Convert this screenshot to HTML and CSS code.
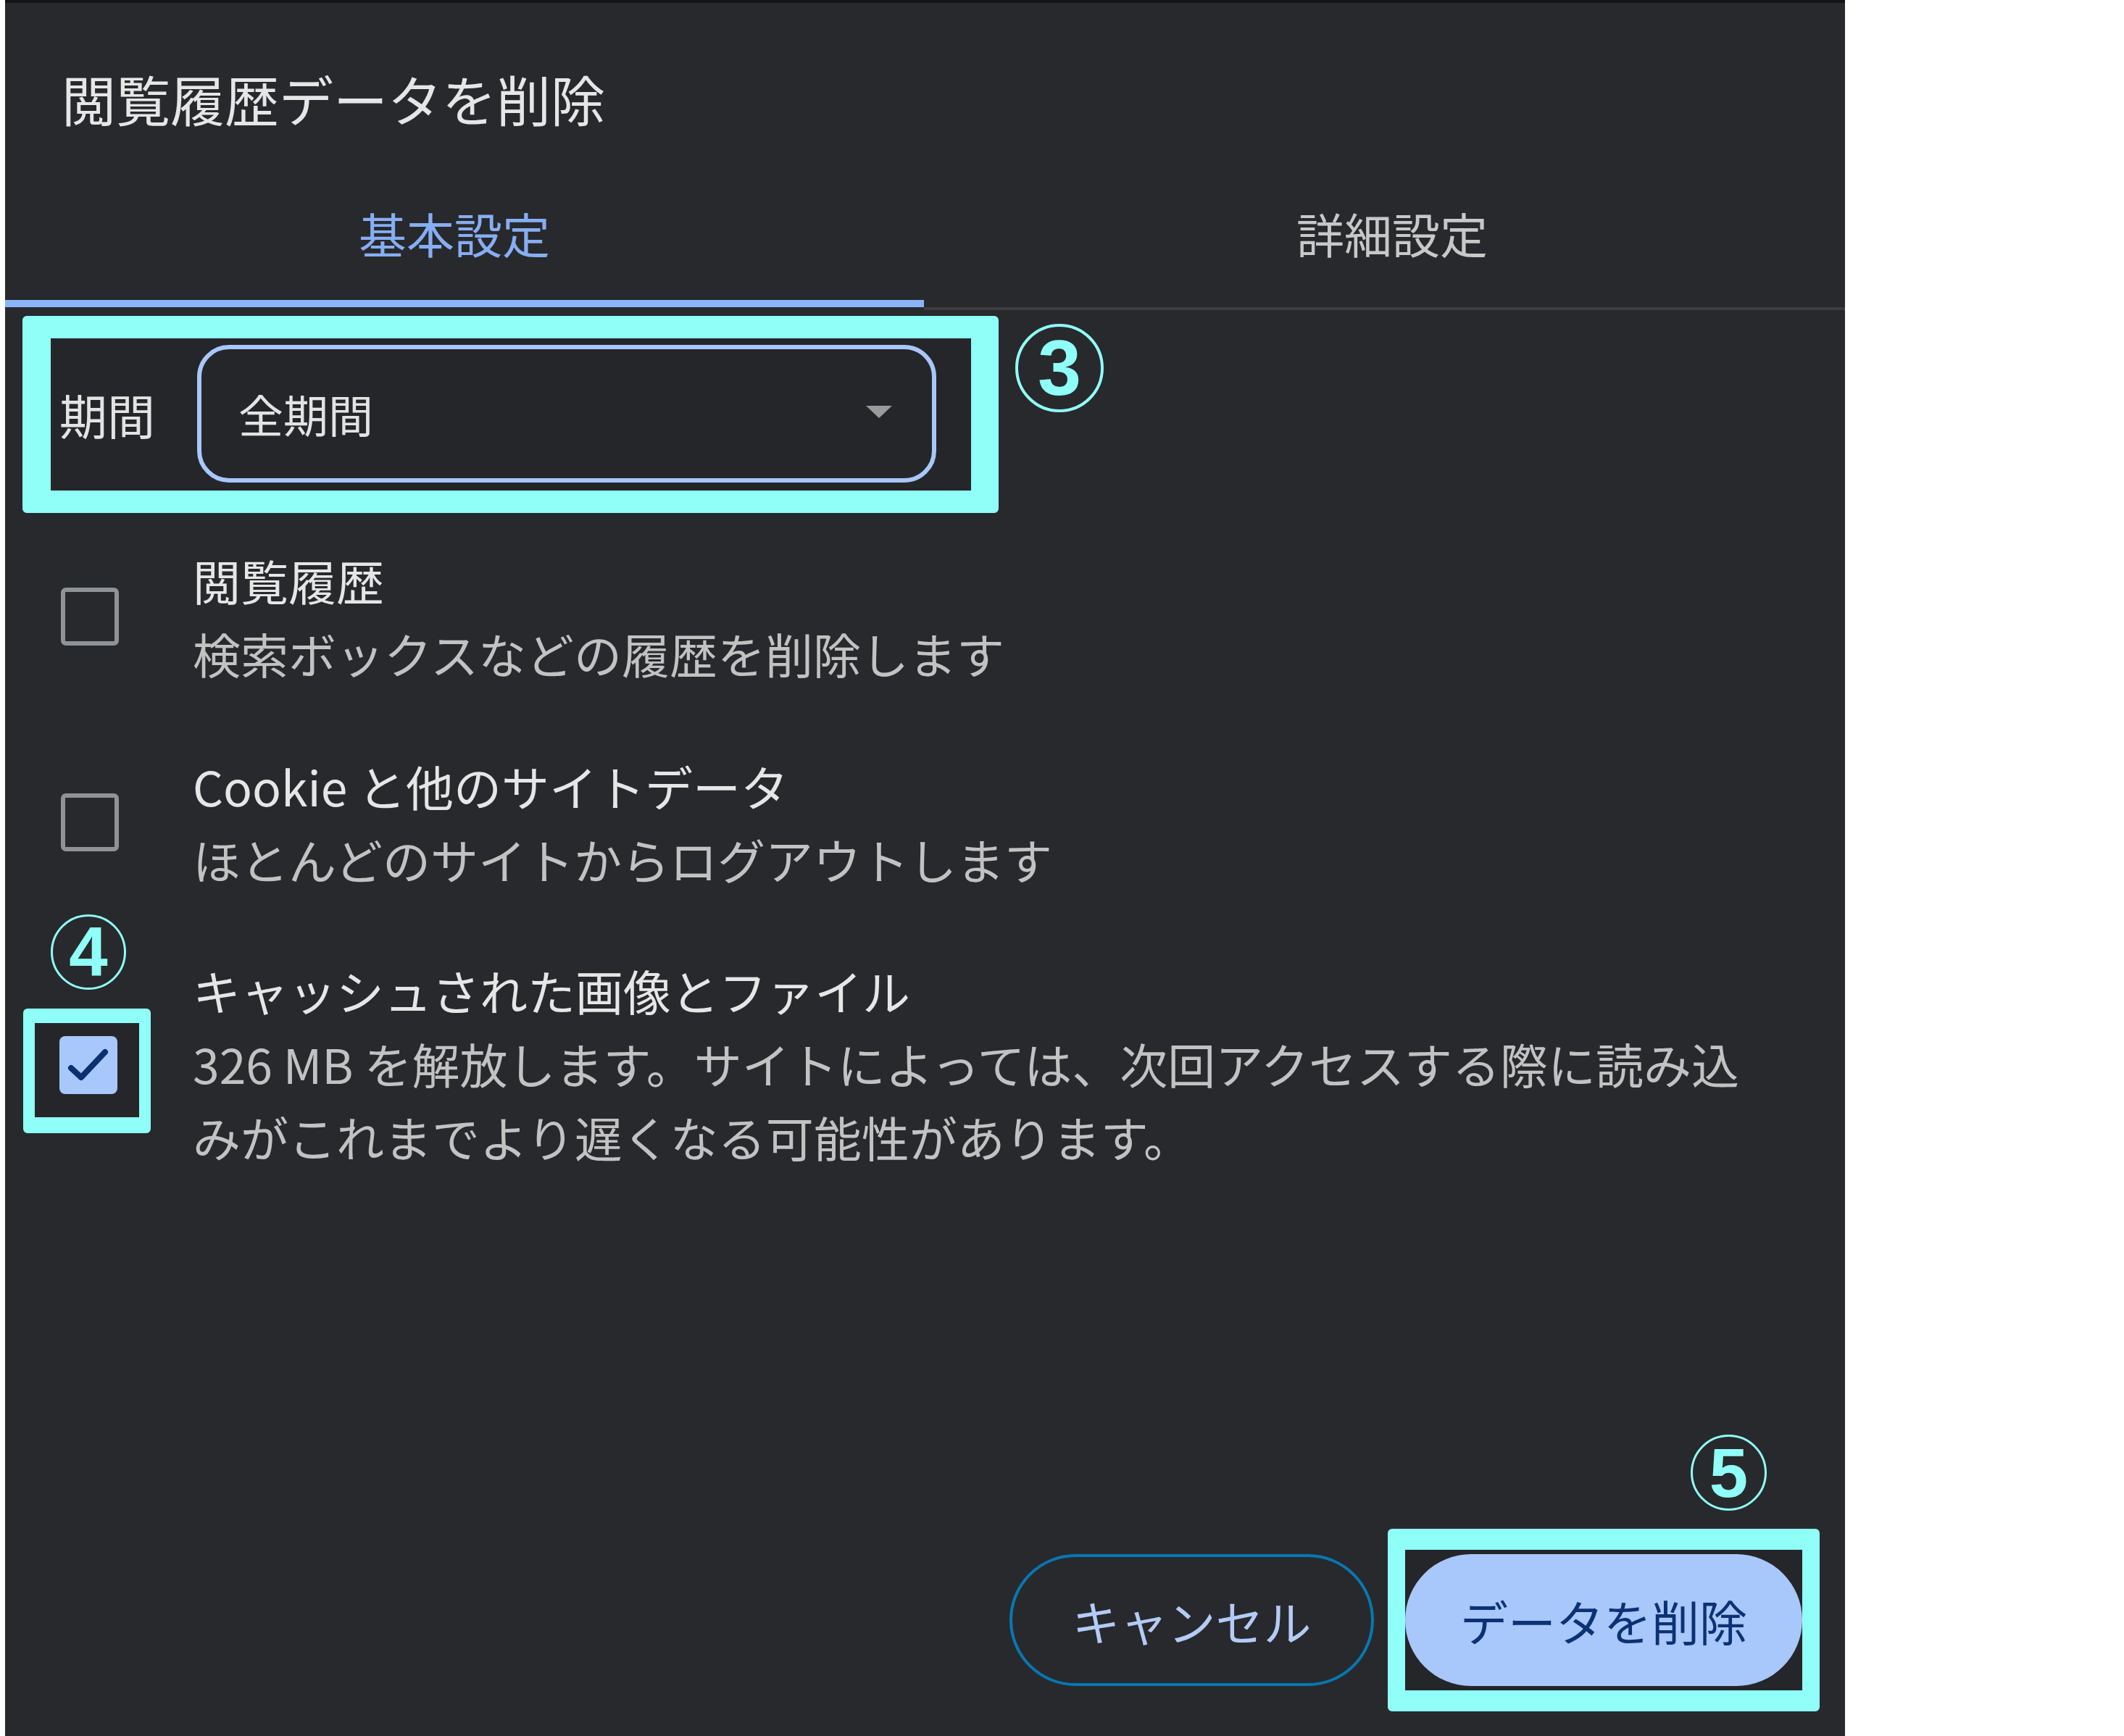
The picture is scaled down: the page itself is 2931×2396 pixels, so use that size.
FILE: index.html
```html
<!DOCTYPE html>
<html lang="ja">
<head>
<meta charset="utf-8">
<title>閲覧履歴データを削除</title>
<link rel="stylesheet" href="styles.css">
</head>
<body>
<div class="panel">
  <h1 class="title">閲覧履歴データを削除</h1>

  <div class="tabs">
    <div class="tab tab-active">基本設定</div>
    <div class="tab tab-idle">詳細設定</div>
  </div>

  <div class="period-row">
    <div class="hl hl-period">
      <div class="period">
        <span class="period-label">期間</span>
        <div class="select">
          <span class="select-value">全期間</span>
          <span class="select-arrow"></span>
        </div>
      </div>
    </div>
    <div class="badge badge-3"><span>3</span></div>
  </div>

  <div class="items">
    <div class="item">
      <span class="cb"></span>
      <div class="item-text">
        <div class="item-title">閲覧履歴</div>
        <div class="item-desc">検索ボックスなどの履歴を削除します</div>
      </div>
    </div>
    <div class="item">
      <span class="cb"></span>
      <div class="item-text">
        <div class="item-title">Cookie と他のサイトデータ</div>
        <div class="item-desc">ほとんどのサイトからログアウトします</div>
      </div>
    </div>
    <div class="item">
      <div class="hl hl-check">
        <div class="badge badge-4"><span>4</span></div>
        <span class="cb cb-on">
          <svg viewBox="0 0 80 80" width="80" height="80"><path d="M16 44 L30 57 L63 22" fill="none" stroke="#0a3070" stroke-width="8" stroke-linecap="round" stroke-linejoin="round"/></svg>
        </span>
      </div>
      <div class="item-text item-text-3">
        <div class="item-title">キャッシュされた画像とファイル</div>
        <div class="item-desc">326 MB を解放します。サイトによっては、次回アクセスする際に読み込<br>みがこれまでより遅くなる可能性があります。</div>
      </div>
    </div>
  </div>

  <div class="actions">
    <button class="btn btn-cancel" type="button">キャンセル</button>
    <div class="hl hl-delete">
      <div class="badge badge-5"><span>5</span></div>
      <button class="btn btn-delete" type="button">データを削除</button>
    </div>
  </div>
</div>
</body>
</html>
```

FILE: styles.css
```css
html, body {
  margin: 0;
  padding: 0;
  background: #ffffff;
}
body {
  font-family: "Noto Sans CJK JP", "Noto Sans", sans-serif;
  width: 2931px;
  height: 2396px;
  overflow: hidden;
}
.panel {
  margin-left: 7px;
  width: 2539px;
  height: 2396px;
  box-sizing: border-box;
  border-top: 4px solid #131416;
  background: #28292d;
  display: flex;
  flex-direction: column;
}
.title {
  margin: 0;
  padding: 87px 0 0 78px;
  font-size: 75px;
  line-height: 90px;
  font-weight: 400;
  color: #e6e6e6;
}
.tabs {
  display: grid;
  grid-template-columns: 1268px 1fr;
  align-items: start;
}
.tab {
  font-size: 66px;
  line-height: 80px;
  text-align: center;
  padding-top: 100px;
}
.tab-active {
  color: #86aef2;
  padding-right: 28px;
  padding-bottom: 53px;
  border-bottom: 10px solid #8ab4f8;
  margin-bottom: 4px;
}
.tab-idle {
  color: #c8c8c8;
  padding-left: 21px;
  padding-bottom: 63px;
  border-bottom: 4px solid #3c3d41;
}
.period-row {
  display: flex;
  align-items: flex-start;
  margin-top: 8px;
  margin-left: 24px;
}
.hl {
  border-style: solid;
  border-color: #8ffff7;
  border-radius: 6px;
  background: #25262a;
}
.hl-period {
  border-width: 31px 38px 31px 39px;
  width: 1270px;
}
.period {
  display: flex;
  align-items: center;
  padding: 9px 48px 11px 12px;
}
.period-label {
  font-size: 66px;
  line-height: 80px;
  color: #e3e3e3;
  width: 132px;
  flex: none;
}
.select {
  margin-left: 58px;
  flex: 1;
  height: 190px;
  box-sizing: border-box;
  border: 6px solid #a8c7fa;
  border-radius: 44px;
  display: flex;
  align-items: center;
  justify-content: space-between;
  padding: 0 55px 0 51px;
}
.select-value {
  font-size: 62px;
  line-height: 80px;
  color: #e3e3e3;
}
.select-arrow {
  width: 0;
  height: 0;
  border-left: 18px solid transparent;
  border-right: 18px solid transparent;
  border-top: 17px solid #9a9a9a;
  margin-top: -6px;
}
.badge {
  box-sizing: border-box;
  border-style: solid;
  border-color: #8ffff7;
  border-radius: 50%;
  display: flex;
  align-items: center;
  justify-content: center;
  color: #8ffff7;
  font-family: "Liberation Sans", Arial, sans-serif;
  font-weight: 700;
  line-height: 1;
}
.badge-3 {
  width: 122px;
  height: 122px;
  border-width: 4px;
  font-size: 108px;
  margin-left: 23px;
  margin-top: 11px;
}
.badge-4 {
  position: absolute;
  left: 22px;
  top: -150px;
  width: 104px;
  height: 104px;
  border-width: 3px;
  font-size: 96px;
}
.badge-5 {
  position: absolute;
  left: 394px;
  top: -159px;
  width: 105px;
  height: 105px;
  border-width: 3px;
  font-size: 96px;
}
.items {
  display: flex;
  flex-direction: column;
  margin-top: 42px;
}
.item {
  display: flex;
  align-items: center;
}
.item + .item {
  margin-top: 82px;
}
.item:last-child {
  margin-top: 80px;
}
.cb {
  flex: none;
  width: 80px;
  height: 80px;
  box-sizing: border-box;
  border: 6px solid #8f9296;
  border-radius: 7px;
  margin-left: 77px;
}
.cb-on {
  display: block;
  margin-left: 0;
  border: none;
  border-radius: 8px;
  background: #a8c7fa;
}
.cb-on svg {
  display: block;
}
.hl-check {
  position: relative;
  align-self: flex-start;
  margin-top: 76px;
  margin-left: 25px;
  border-width: 20px 16px 22px 16px;
  padding: 18px 30px 32px 34px;
  flex: none;
}
.item-text {
  margin-left: 102px;
  font-size: 66px;
  line-height: 101px;
}
.item-text-3 {
  margin-left: 58px;
}
.item-title {
  color: #e6e6e6;
  font-weight: 400;
  white-space: nowrap;
}
.item-desc {
  color: #c2c2c2;
  white-space: nowrap;
}
.actions {
  margin-top: auto;
  display: flex;
  justify-content: flex-end;
  align-items: center;
  padding: 0 35px 34px 0;
}
.btn {
  font-family: inherit;
  font-size: 66px;
  line-height: 80px;
  margin: 0;
  padding: 0;
  height: 182px;
  border-radius: 91px;
  box-sizing: border-box;
  cursor: pointer;
}
.btn-cancel {
  width: 503px;
  background: transparent;
  border: 4px solid #0678b2;
  color: #b3cbf6;
  margin-right: 19px;
}
.hl-delete {
  position: relative;
  border-width: 29px 24px;
  padding: 6px 0;
  display: flex;
}
.btn-delete {
  width: 548px;
  background: #a8c7fa;
  border: none;
  color: #0c3275;
}
```
